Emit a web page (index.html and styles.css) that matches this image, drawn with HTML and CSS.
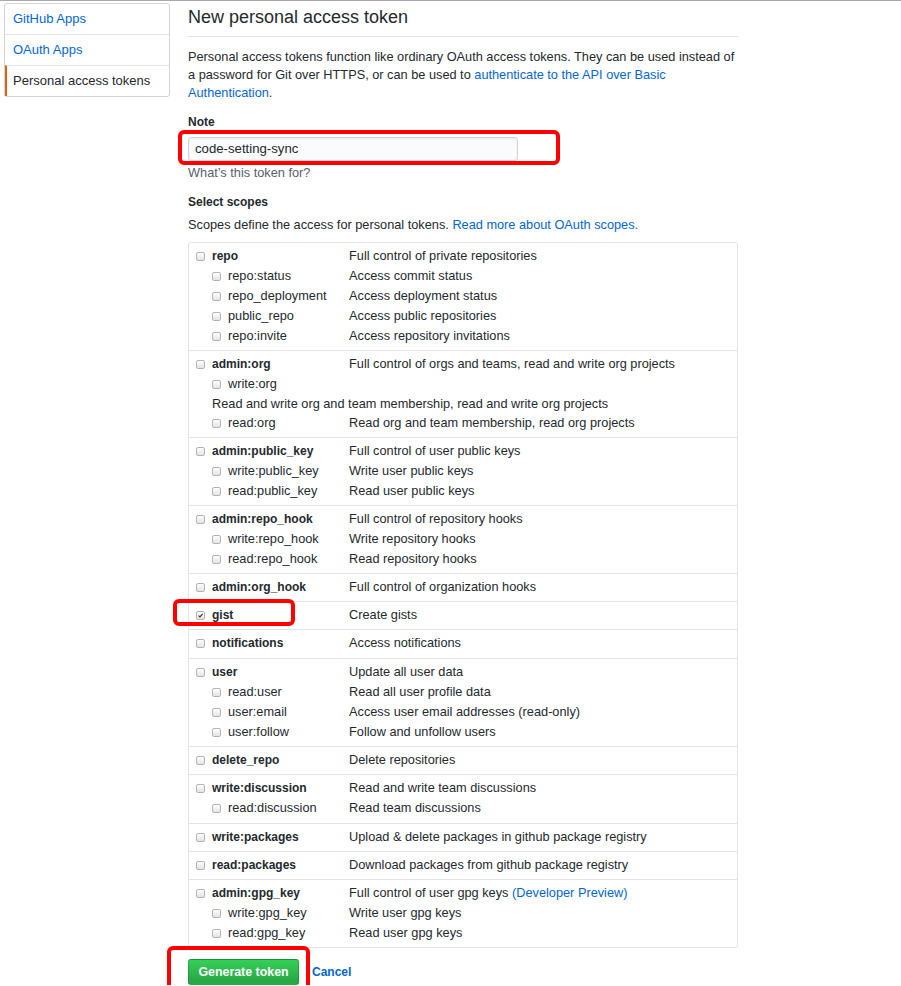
FILE: index.html
```html
<!DOCTYPE html>
<html lang="en">
<head>
<meta charset="utf-8">
<title>New personal access token</title>
<link rel="stylesheet" href="styles.css">
</head>
<body class="page">
<div class="topline"></div>
<div class="layout">
  <nav class="menu">
    <a class="menu-item" href="#">GitHub Apps</a>
    <a class="menu-item" href="#">OAuth Apps</a>
    <a class="menu-item selected" href="#">Personal access tokens</a>
  </nav>
  <main class="main">
    <h2 class="title">New personal access token</h2>
    <p class="intro">Personal access tokens function like ordinary OAuth access tokens. They can be used instead of a password for Git over HTTPS, or can be used to <a class="link" href="#">authenticate to the API over Basic Authentication</a>.</p>

    <div class="field-label">Note</div>
    <div class="input-wrap">
      <div class="input">code-setting-sync</div>
      <div class="annot annot-note"></div>
    </div>
    <div class="hint">What’s this token for?</div>

    <div class="field-label scopes-label">Select scopes</div>
    <div class="scopes-note">Scopes define the access for personal tokens. <a class="link" href="#">Read more about OAuth scopes.</a></div>

    <div class="scopes">
      <div class="group">
        <div class="row"><div class="name parent"><span class="cb"></span>repo</div><div class="desc">Full control of private repositories</div></div>
        <div class="row"><div class="name child"><span class="cb"></span>repo:status</div><div class="desc">Access commit status</div></div>
        <div class="row"><div class="name child"><span class="cb"></span>repo_deployment</div><div class="desc">Access deployment status</div></div>
        <div class="row"><div class="name child"><span class="cb"></span>public_repo</div><div class="desc">Access public repositories</div></div>
        <div class="row"><div class="name child"><span class="cb"></span>repo:invite</div><div class="desc">Access repository invitations</div></div>
      </div>
      <div class="group">
        <div class="row"><div class="name parent"><span class="cb"></span>admin:org</div><div class="desc">Full control of orgs and teams, read and write org projects</div></div>
        <div class="row"><div class="name child"><span class="cb"></span>write:org</div><div class="desc"></div></div>
        <div class="wide-desc">Read and write org and team membership, read and write org projects</div>
        <div class="row"><div class="name child"><span class="cb"></span>read:org</div><div class="desc">Read org and team membership, read org projects</div></div>
      </div>
      <div class="group">
        <div class="row"><div class="name parent"><span class="cb"></span>admin:public_key</div><div class="desc">Full control of user public keys</div></div>
        <div class="row"><div class="name child"><span class="cb"></span>write:public_key</div><div class="desc">Write user public keys</div></div>
        <div class="row"><div class="name child"><span class="cb"></span>read:public_key</div><div class="desc">Read user public keys</div></div>
      </div>
      <div class="group">
        <div class="row"><div class="name parent"><span class="cb"></span>admin:repo_hook</div><div class="desc">Full control of repository hooks</div></div>
        <div class="row"><div class="name child"><span class="cb"></span>write:repo_hook</div><div class="desc">Write repository hooks</div></div>
        <div class="row"><div class="name child"><span class="cb"></span>read:repo_hook</div><div class="desc">Read repository hooks</div></div>
      </div>
      <div class="group">
        <div class="row"><div class="name parent"><span class="cb"></span>admin:org_hook</div><div class="desc">Full control of organization hooks</div></div>
      </div>
      <div class="group">
        <div class="row gist-row"><div class="name parent"><span class="cb checked"><svg viewBox="0 0 9 9" width="9" height="9"><path d="M2 4.6 L3.8 6.4 L7.2 2.4" fill="none" stroke="#333" stroke-width="1.5"/></svg></span>gist</div><div class="desc">Create gists</div><div class="annot annot-gist"></div></div>
      </div>
      <div class="group tall">
        <div class="row"><div class="name parent"><span class="cb"></span>notifications</div><div class="desc">Access notifications</div></div>
      </div>
      <div class="group">
        <div class="row"><div class="name parent"><span class="cb"></span>user</div><div class="desc">Update all user data</div></div>
        <div class="row"><div class="name child"><span class="cb"></span>read:user</div><div class="desc">Read all user profile data</div></div>
        <div class="row"><div class="name child"><span class="cb"></span>user:email</div><div class="desc">Access user email addresses (read-only)</div></div>
        <div class="row"><div class="name child"><span class="cb"></span>user:follow</div><div class="desc">Follow and unfollow users</div></div>
      </div>
      <div class="group">
        <div class="row"><div class="name parent"><span class="cb"></span>delete_repo</div><div class="desc">Delete repositories</div></div>
      </div>
      <div class="group tall">
        <div class="row"><div class="name parent"><span class="cb"></span>write:discussion</div><div class="desc">Read and write team discussions</div></div>
        <div class="row"><div class="name child"><span class="cb"></span>read:discussion</div><div class="desc">Read team discussions</div></div>
      </div>
      <div class="group">
        <div class="row"><div class="name parent"><span class="cb"></span>write:packages</div><div class="desc">Upload &amp; delete packages in github package registry</div></div>
      </div>
      <div class="group">
        <div class="row"><div class="name parent"><span class="cb"></span>read:packages</div><div class="desc">Download packages from github package registry</div></div>
      </div>
      <div class="group">
        <div class="row"><div class="name parent"><span class="cb"></span>admin:gpg_key</div><div class="desc">Full control of user gpg keys <a class="link" href="#">(Developer Preview)</a></div></div>
        <div class="row"><div class="name child"><span class="cb"></span>write:gpg_key</div><div class="desc">Write user gpg keys</div></div>
        <div class="row"><div class="name child"><span class="cb"></span>read:gpg_key</div><div class="desc">Read user gpg keys</div></div>
      </div>
    </div>

    <div class="actions">
      <button class="btn-primary" type="button">Generate token</button>
      <a class="cancel" href="#">Cancel</a>
      <div class="annot annot-btn"></div>
    </div>
  </main>
</div>
</body>
</html>
```

FILE: styles.css
```css
html { overflow: hidden; }

.page {
  margin: 0;
  font-family: "Liberation Sans", Arial, sans-serif;
  font-size: 12.75px;
  line-height: 18px;
  color: #24292e;
  background: #fff;
}

.topline {
  height: 1px;
  background: #a9a9a9;
}

.layout {
  display: flex;
  align-items: flex-start;
  padding-left: 4px;
}

.menu {
  width: 166px;
  box-sizing: border-box;
  margin-top: 2px;
  border: 1px solid #d1d5da;
  border-radius: 3px;
  display: flex;
  flex-direction: column;
}

.menu-item {
  display: block;
  height: 30px;
  line-height: 29px;
  padding-left: 8px;
  color: #0366d6;
  text-decoration: none;
  font-size: 13px;
  border-top: 1px solid #e1e4e8;
}

.menu-item:first-child {
  border-top: 0;
}

.menu-item.selected {
  color: #24292e;
  border-left: 2px solid #e36209;
  padding-left: 6px;
}

.main {
  width: 550px;
  margin-left: 18px;
}

.title {
  margin: 0;
  padding: 2px 0 5px;
  font-size: 18px;
  line-height: 28px;
  font-weight: normal;
  border-bottom: 1px solid #e1e4e8;
}

.intro {
  margin: 11px 0 0;
}

.link {
  color: #0366d6;
  text-decoration: none;
}

.field-label {
  margin-top: 11px;
  font-weight: bold;
  font-size: 12px;
}

.input-wrap {
  position: relative;
  margin-top: 6px;
  width: 330px;
}

.input {
  height: 24px;
  box-sizing: border-box;
  border: 1px solid #d1d5da;
  border-radius: 3px;
  background: #fafbfc;
  padding: 0 6px;
  line-height: 22px;
  font-size: 13.2px;
  box-shadow: inset 0 1px 2px rgba(27, 31, 35, 0.075);
}

.hint {
  margin-top: 3px;
  color: #586069;
}

.scopes-label {
  margin-top: 11px;
}

.scopes-note {
  margin-top: 5px;
}

.scopes {
  margin-top: 8px;
  border: 1px solid #e1e4e8;
  border-radius: 3px;
}

.group {
  padding: 3px 0 4px;
  border-top: 1px solid #e1e4e8;
}

.group.tall {
  padding-bottom: 5px;
}

.group:first-child {
  border-top: 0;
}

.row {
  display: flex;
  height: 20px;
  line-height: 20px;
  position: relative;
}

.name {
  width: 160px;
  flex: none;
  box-sizing: border-box;
  display: flex;
  align-items: center;
  gap: 7px;
  white-space: nowrap;
}

.name.parent {
  padding-left: 7px;
  font-weight: bold;
  font-size: 12px;
}

.name.child {
  padding-left: 23px;
  gap: 7px;
}

.desc {
  white-space: nowrap;
}

.wide-desc {
  padding-left: 23px;
  height: 19px;
  line-height: 19px;
}

.cb {
  width: 9px;
  height: 9px;
  box-sizing: border-box;
  border: 1px solid #b4b4b4;
  border-radius: 2px;
  background: linear-gradient(#fdfdfd, #e4e4e4);
  flex: none;
  display: flex;
  align-items: center;
  justify-content: center;
  margin-top: 1px;
}

.cb svg {
  display: block;
}

.actions {
  position: relative;
  margin-top: 11px;
  display: flex;
  align-items: center;
  gap: 13px;
}

.btn-primary {
  width: 111px;
  height: 26px;
  box-sizing: border-box;
  border: 1px solid rgba(27, 31, 35, 0.2);
  border-radius: 3px;
  background: linear-gradient(#34d058, #28a745 90%);
  color: #fff;
  font-family: "Liberation Sans", Arial, sans-serif;
  font-size: 12.4px;
  font-weight: bold;
  padding: 0;
}

.cancel {
  color: #0366d6;
  font-weight: bold;
  font-size: 12px;
  text-decoration: none;
}

.annot {
  position: absolute;
  box-sizing: border-box;
  border: 4px solid #ff0000;
  border-radius: 6px;
  pointer-events: none;
}

.annot-note {
  left: -10px;
  top: -7px;
  width: 382px;
  height: 35px;
}

.annot-gist {
  left: -16px;
  top: -6px;
  width: 122px;
  height: 27px;
}

.annot-btn {
  left: -21px;
  top: -13px;
  width: 143px;
  height: 50px;
}
```
